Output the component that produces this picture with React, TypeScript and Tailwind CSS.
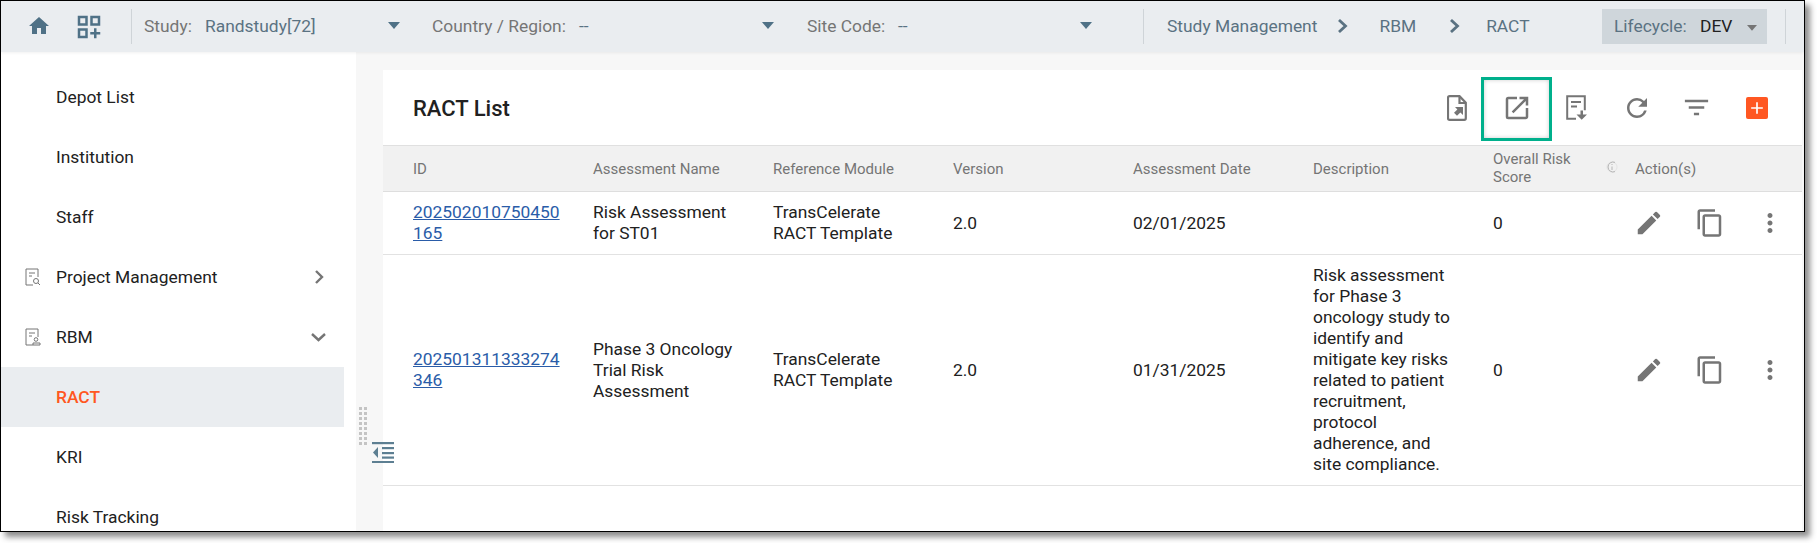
import React from "react";
import { MdHome, MdOutlineDashboardCustomize, MdOpenInNew, MdRefresh, MdFilterList, MdEdit, MdContentCopy, MdMoreVert, MdAdd } from "react-icons/md";

const Caret = ({ cls = "text-[#4f7186]", w = 12 }: { cls?: string; w?: number }) => (
  <svg width={w} height={(w * 2) / 3} viewBox="0 0 12 8" className={cls}><path d="M0 0h12L6 7z" fill="currentColor" /></svg>
);

const Chev = () => (
  <svg width="11" height="14" viewBox="0 0 11 14" fill="none" stroke="#5a7282" strokeWidth="2.8"><path d="M2 1l6.5 6L2 13" /></svg>
);

const Select = ({ w, lw, label, value, pr }: { w: string; lw: string; label: string; value: string; pr: string }) => (
  <div className={`flex items-center shrink-0 ${w} ${pr}`}>
    <span className={`text-[#757575] shrink-0 ${lw}`}>{label}</span>
    <span className="text-[#5a7282] flex-1">{value}</span>
    <Caret />
  </div>
);

const Divider = () => <div className="w-px h-[35px] bg-[#cfd4d8] shrink-0" />;

const Header = () => (
  <header className="flex items-center h-[51px] bg-[#eaedf0] shrink-0 text-[17.4px] shadow-[0_1px_3px_rgba(0,0,0,0.06)] relative z-10">
    <div className="w-[73px] pl-[26px] shrink-0 text-[#4f7186] -mt-[2px]"><MdHome size={24} /></div>
    <div className="w-[57px] shrink-0 text-[#4f7186]"><MdOutlineDashboardCustomize size={30} /></div>
    <Divider />
    <div className="w-[12px] shrink-0" />
    <Select w="w-[288px]" pr="pr-[32px]" lw="w-[61px]" label="Study:" value="Randstudy[72]" />
    <Select w="w-[375px]" pr="pr-[33px]" lw="w-[147px]" label="Country / Region:" value="--" />
    <Select w="w-[336px]" pr="pr-[51px]" lw="w-[91px]" label="Site Code:" value="--" />
    <Divider />
    <div className="flex items-center pl-[23px] w-[458px] shrink-0 text-[#5a7282]">
      <span>Study Management</span>
      <span className="ml-[20px] mr-[31px]"><Chev /></span>
      <span>RBM</span>
      <span className="ml-[33px] mr-[26px]"><Chev /></span>
      <span>RACT</span>
    </div>
    <div className="flex items-center w-[165px] h-[35px] bg-[#cfd6db] pl-[12px] shrink-0">
      <span className="text-[#5a7282] w-[86px]">Lifecycle:</span>
      <span className="text-[#212121] w-[47px]">DEV</span>
      <span className="mt-[3px]"><Caret cls="text-[#757575]" w={10} /></span>
    </div>
    <div className="w-[18px] shrink-0" />
    <Divider />
  </header>
);

const NavIcon = ({ kind }: { kind: "search" | "person" }) => (
  <svg width="16" height="18" viewBox="0 0 16 18" fill="none" stroke="#757575" strokeWidth="1">
    <path d="M8 17H1V1h12v8" />
    <path d="M4 5h6M4 8h3" />
    {kind === "search" ? (
      <>
        <circle cx="11" cy="13" r="2.5" />
        <path d="M13 15l2 2" />
      </>
    ) : (
      <>
        <circle cx="11" cy="11.5" r="1.8" />
        <path d="M8 17v-2h7v2z" />
      </>
    )}
  </svg>
);

const NavRow = ({ label, icon, chev, active }: { label: string; icon?: "search" | "person"; chev?: "right" | "down"; active?: boolean }) => (
  <div className={`relative flex items-center h-[60px] shrink-0 w-[343px] ${active ? "bg-[#eaedf0]" : ""}`}>
    <div className="w-[55px] pl-[24px] shrink-0 flex items-center">{icon && <NavIcon kind={icon} />}</div>
    <span className={`flex-1 ${active ? "text-[#ff5722] font-medium" : "text-[#212121]"}`}>{label}</span>
    {chev === "right" && (
      <svg width="10" height="14" viewBox="0 0 10 14" fill="none" stroke="#757575" strokeWidth="2.4" className="mr-[20px]"><path d="M2 1l6 6-6 6" /></svg>
    )}
    {chev === "down" && (
      <svg width="15" height="9" viewBox="0 0 15 9" fill="none" stroke="#757575" strokeWidth="2.4" className="mr-[18px]"><path d="M1 1l6.5 6L14 1" /></svg>
    )}
  </div>
);

const Sidebar = () => (
  <nav className="w-[355px] bg-white shrink-0 pt-[15px] flex flex-col overflow-hidden text-[17.4px] leading-[21px]">
    <NavRow label="Depot List" />
    <NavRow label="Institution" />
    <NavRow label="Staff" />
    <NavRow label="Project Management" icon="search" chev="right" />
    <NavRow label="RBM" icon="person" chev="down" />
    <NavRow label="RACT" active />
    <NavRow label="KRI" />
    <NavRow label="Risk Tracking" />
  </nav>
);

const ExportDoc = () => (
  <svg width="20" height="26" viewBox="0 0 20 26" fill="none">
    <path d="M2.5 1.2h10l6.3 6.5v15.6a1.5 1.5 0 0 1-1.5 1.5H2.5A1.5 1.5 0 0 1 1 23.3V2.7a1.5 1.5 0 0 1 1.5-1.5z" stroke="#757575" strokeWidth="2.2" />
    <path d="M12.5 2v6h6" stroke="#757575" strokeWidth="2.2" />
    <path d="M8 12h8v8l-2.6-2.6-3.4 3.4-3-3 3.4-3.4z" fill="#757575" />
  </svg>
);

const ListDown = () => (
  <svg width="22" height="25" viewBox="0 0 22 25" fill="none">
    <path d="M10 23.8H1.2V1.2h17.6v14" stroke="#757575" strokeWidth="2" />
    <path d="M5 7h10M5 11.5h6" stroke="#757575" strokeWidth="2" />
    <path d="M14.5 15.5h2.5v4h4l-5.3 5.3-5.2-5.3h4z" fill="#757575" />
  </svg>
);

const ToolBtn = ({ w, children }: { w: string; children: React.ReactNode }) => (
  <div className={`flex items-center justify-center shrink-0 ${w}`}>{children}</div>
);

const Actions = () => (
  <div className="flex items-center gap-[30.5px] text-[#757575] -ml-px">
    <MdEdit size={30} className="shrink-0" />
    <MdContentCopy size={30} className="shrink-0" />
    <MdMoreVert size={30} className="shrink-0" />
  </div>
);

const Cell = ({ children, first }: { children?: React.ReactNode; first?: boolean }) => (
  <div className={`${first ? "pl-[30px] pr-[33px]" : "pr-[33px]"}`}>{children}</div>
);

const COLS = "grid grid-cols-[210px_180px_180px_180px_180px_180px_142px_1fr] items-center";

const Row = ({ h, id1, id2, name, date, desc }: { h: string; id1: string; id2: string; name: string; date: string; desc?: string }) => (
  <div className={`${COLS} ${h} border-b border-[#e2e2e2] box-content text-[#212121]`}>
    <Cell first>
      <a className="text-[#2a5ca8] underline">{id1}<br />{id2}</a>
    </Cell>
    <Cell>{name}</Cell>
    <Cell>TransCelerate RACT Template</Cell>
    <Cell>2.0</Cell>
    <Cell>{date}</Cell>
    <Cell>{desc}</Cell>
    <Cell>0</Cell>
    <Actions />
  </div>
);

const Main = () => (
  <main className="relative flex-1 min-w-0 bg-[#f7f7f7] pl-[27px] pt-[18px] pr-[2px] overflow-hidden">
    <div className="h-full bg-white">
      <div className="flex items-center h-[76px] border-b border-[#e0e0e0] pl-[30px]">
        <h1 className="text-[22px] font-medium text-[#212121] flex-1 mt-[2px]">RACT List</h1>
        <div className="flex items-center text-[#757575] pr-[34px]">
          <ToolBtn w="w-[20px]"><ExportDoc /></ToolBtn>
          <ToolBtn w="w-[99px]"><MdOpenInNew size={30} className="shrink-0" /></ToolBtn>
          <ToolBtn w="w-[22px]"><ListDown /></ToolBtn>
          <ToolBtn w="w-[97px]"><MdRefresh size={30} className="shrink-0" /></ToolBtn>
          <ToolBtn w="w-[23px]"><MdFilterList size={31} className="shrink-0" /></ToolBtn>
          <div className="ml-[38px] w-[22px] h-[22px] rounded-[2px] bg-[#ff5722] flex items-center justify-center text-white shrink-0"><MdAdd size={20} /></div>
        </div>
      </div>
      <div className={`${COLS} h-[46px] bg-[#f1f1f1] border-b border-[#dedede] text-[#757575] text-[15px] leading-[18px]`}>
        <Cell first>ID</Cell>
        <Cell>Assessment Name</Cell>
        <Cell>Reference Module</Cell>
        <Cell>Version</Cell>
        <Cell>Assessment Date</Cell>
        <Cell>Description</Cell>
        <div className="flex items-center">
          <span className="w-[113px] shrink-0 -mt-[1px]">Overall Risk<br />Score</span>
          <svg width="12" height="12" viewBox="0 0 12 12" fill="none" strokeWidth="1" className="-mt-[4px]">
            <circle cx="6" cy="6" r="5" stroke="#e4e4e4" />
            <path d="M9 1.4A5 5 0 1 0 9 10.6" stroke="#b5b5b5" />
            <path d="M6 3v1M6 5.5V9" stroke="#b5b5b5" />
          </svg>
        </div>
        <span>Action(s)</span>
      </div>
      <div className="text-[17.4px] leading-[21px]">
        <Row h="h-[62px]" id1="202502010750450" id2="165" name="Risk Assessment for ST01" date="02/01/2025" />
        <Row h="h-[230px]" id1="202501311333274" id2="346" name="Phase 3 Oncology Trial Risk Assessment" date="01/31/2025" desc="Risk assessment for Phase 3 oncology study to identify and mitigate key risks related to patient recruitment, protocol adherence, and site compliance." />
      </div>
    </div>
    {/* annotation highlight */}
    <div className="absolute left-[1125px] top-[25px] w-[71px] h-[64px] border-[3px] border-[#00b08c] shadow-[inset_0_0_4px_rgba(0,0,0,0.2)]" />
    {/* drag handle + collapse icon */}
    <div className="absolute left-[3px] top-[355px] grid grid-cols-2 gap-x-[2px] gap-y-[2px]">
      {Array.from({ length: 16 }).map((_, i) => (
        <div key={i} className="w-[3px] h-[3px] bg-[#c4c4c4]" />
      ))}
    </div>
    <svg width="22" height="21" viewBox="0 0 22 21" className="absolute left-[16px] top-[390px]" fill="#5d7f92">
      <rect x="0" y="0" width="22" height="2.2" />
      <rect x="10" y="5" width="12" height="2.2" />
      <rect x="10" y="10" width="12" height="2.2" />
      <rect x="10" y="14.5" width="12" height="2.2" />
      <rect x="0" y="19" width="22" height="2.2" />
      <path d="M6 5v11L1 10.5z" />
    </svg>
  </main>
);

export default function App() {
  return (
    <div className="w-[1817px] h-[543px] bg-white overflow-hidden" style={{ fontFamily: "Roboto, sans-serif" }}>
      <div className="w-[1805px] h-[532px] border border-black flex flex-col overflow-hidden shadow-[5px_5px_6px_rgba(0,0,0,0.45)]">
        <Header />
        <div className="flex flex-1 min-h-0">
          <Sidebar />
          <Main />
        </div>
      </div>
    </div>
  );
}
